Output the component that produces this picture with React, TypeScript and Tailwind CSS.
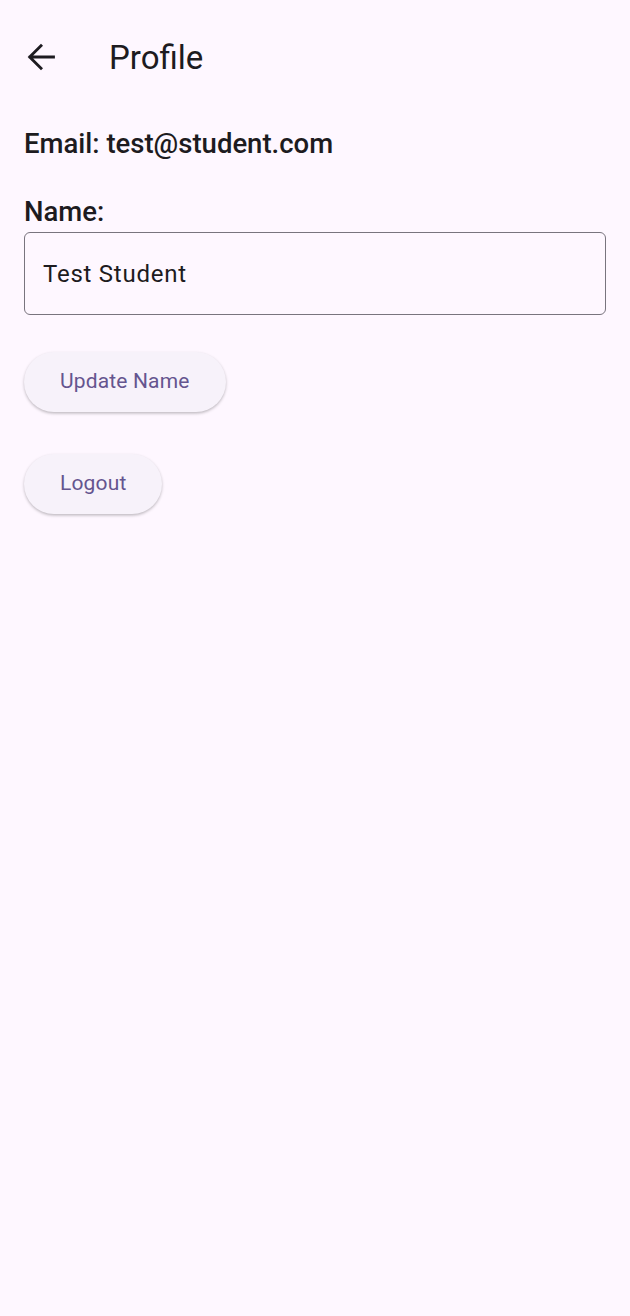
import React from "react";

const ArrowBack = () => (
  <svg
    viewBox="0 0 24 24"
    width="40"
    height="40"
    fill="none"
    stroke="#1d1b20"
    strokeWidth="1.7"
    strokeLinecap="square"
  >
    <path d="M19.5 12H5.5M12 5.2L5.2 12L12 18.8" />
  </svg>
);

const PillButton = ({ label }: { label: string }) => (
  <button className="h-[60px] px-[36px] rounded-full bg-[#f7f2fa] text-[#65558f] text-[21px] tracking-[0.15px] shadow-[0_1.5px_3px_rgba(0,0,0,0.25)] self-start">
    {label}
  </button>
);

export default function App() {
  return (
    <div
      className="min-h-[1316px] w-full bg-[#fef7ff] text-[#1d1b20]"
      style={{ fontFamily: "Roboto, 'Noto Sans', sans-serif" }}
    >
      <header className="flex items-center h-[84px] pt-[30px] pl-[21px]">
        <ArrowBack />
        <h1 className="ml-[48px] text-[33px] leading-none">Profile</h1>
      </header>

      <main className="flex flex-col px-[24px]">
        <p className="mt-[44px] text-[27.5px] font-medium leading-[32px]">
          Email: test@student.com
        </p>

        <p className="mt-[36px] text-[27.5px] font-medium leading-[32px]">Name:</p>
        <div className="mt-[4px] h-[83px] rounded-[6px] border-[1.5px] border-[#79747e] flex items-center px-[18px]">
          <span className="text-[24px] tracking-[0.75px]">Test Student</span>
        </div>

        <div className="mt-[37px] flex flex-col gap-[42px]">
          <PillButton label="Update Name" />
          <PillButton label="Logout" />
        </div>
      </main>
    </div>
  );
}
